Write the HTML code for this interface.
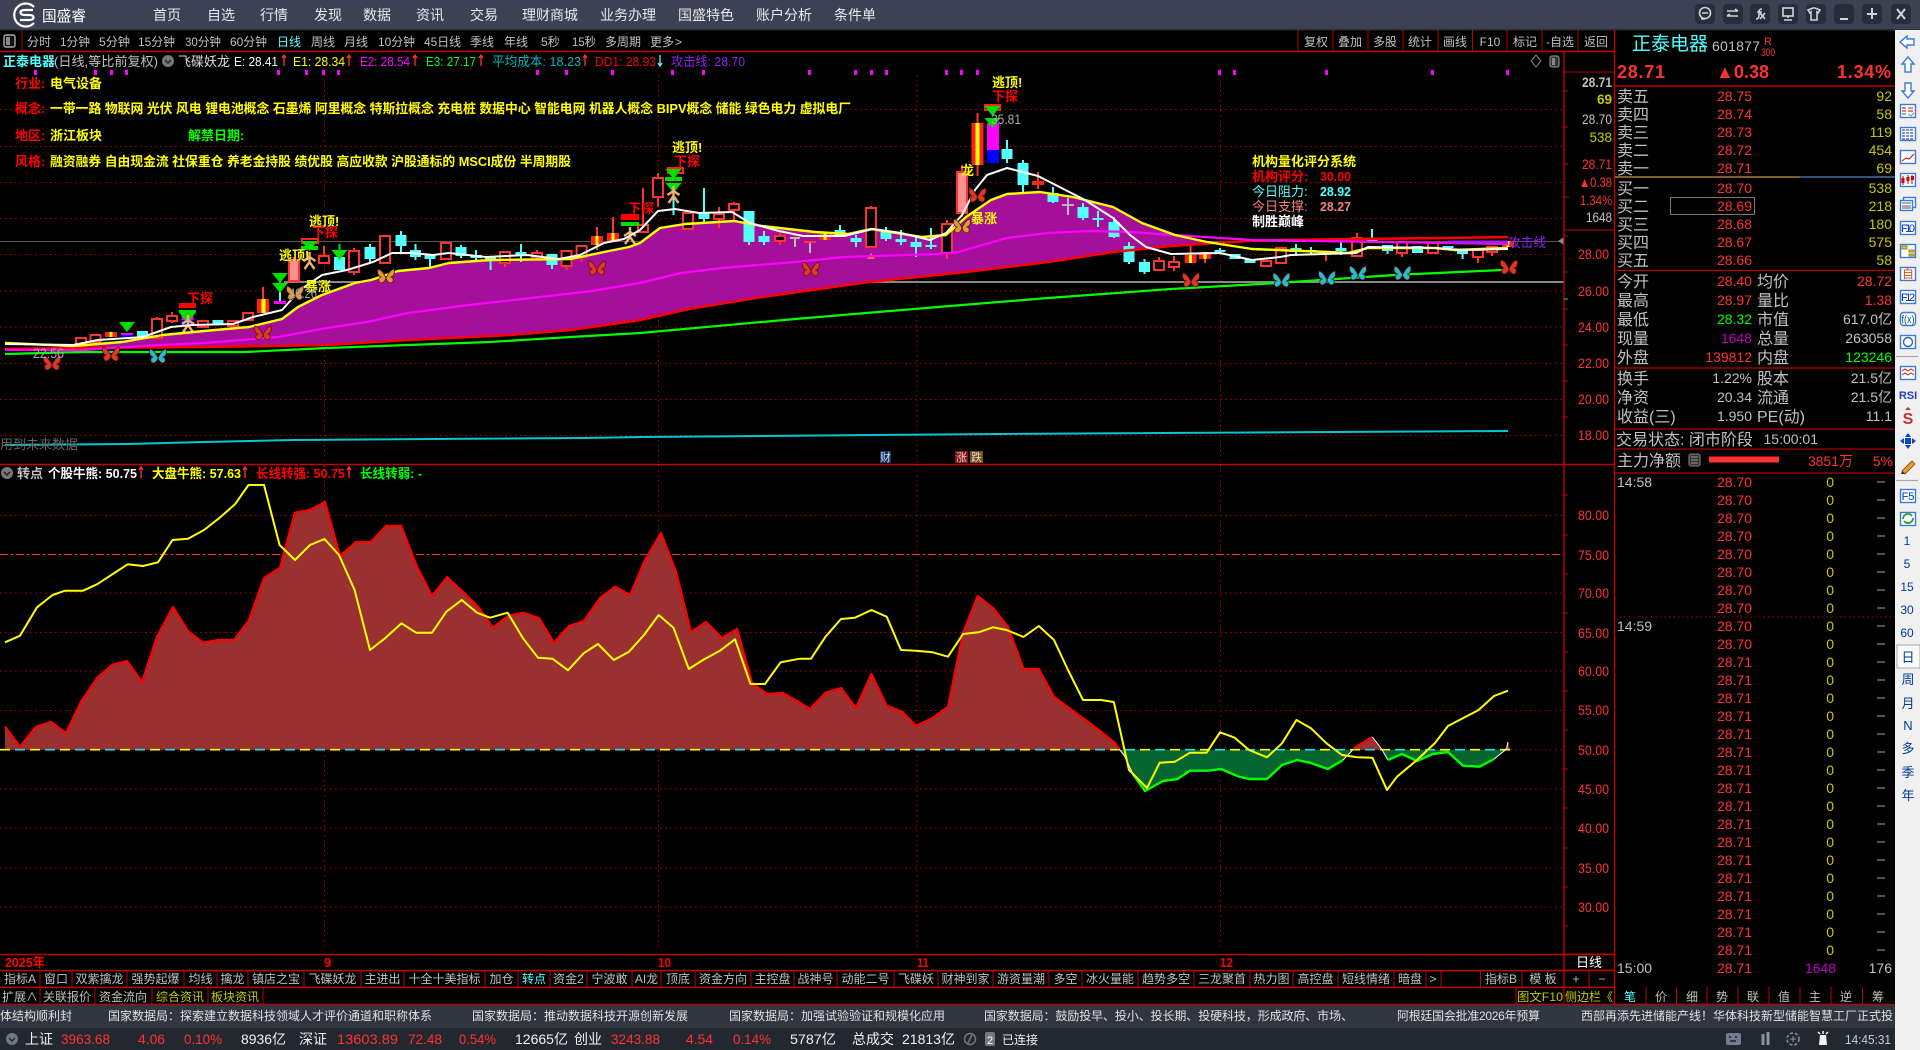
<!DOCTYPE html>
<html lang="zh"><head><meta charset="utf-8"><title>国盛睿</title>
<style>
html,body{margin:0;padding:0;background:#000;width:1920px;height:1050px;overflow:hidden}
svg{display:block;position:absolute;left:0;top:0}
text{font-family:"Liberation Sans","WenQuanYi Zen Hei","Noto Sans CJK SC",sans-serif;white-space:pre}
.g{fill:#c0c0c0}.r{fill:#ff3232}.y{fill:#ffff00}.v{fill:#c8c800}.c{fill:#54ffff}.w{fill:#fff}.l{fill:#00ff00}.m{fill:#ff00ff}.h{fill:#ff0000}.n{fill:#003a9a}
.b{font-weight:bold}.e{text-anchor:end}.t{text-anchor:middle}
</style></head><body>
<svg xmlns="http://www.w3.org/2000/svg" width="1920" height="1050" viewBox="0 0 1920 1050">
<defs>
<g id="bf"><path d="M0 2C-2-2-4-6-8-7-9-3-8 0-5 1-8 2-8 6-5 7-3 7-1 5 0 2 1 5 3 7 5 7 8 6 8 2 5 1 8 0 9-3 8-7 4-6 2-2 0 2z" stroke="#601010" stroke-width=".8"/></g>
<g id="pn"><path d="M0-8V2M0-3-6 1M0-3 6 1M0 2-5 9M0 2 5 9" stroke="#f0b070" stroke-width="2.4" fill="none"/></g>
<g id="dn"><path d="M-8 0H8L0 10z" fill="#00e000"/></g>
</defs>
<rect width="1920" height="1050" fill="#000"/>

<!-- Title bar -->
<rect width="1920" height="30" fill="#3c4254"/><rect y="29" width="1920" height="1.5" fill="#2b2f3b"/>
<path d="M34 7A11.500 11.500 0 1 0 34 23" fill="none" stroke="#fff" stroke-width="2.200"/>
<path d="M33 10H25Q20.500 10 20.500 12.500Q20.500 15 25 15H29Q33.500 15 33.500 17.500Q33.500 20 29 20H20" fill="none" stroke="#fff" stroke-width="2.200"/>
<text x="42" y="21" font-size="15" class="w" textLength="44" lengthAdjust="spacingAndGlyphs">国盛睿</text>
<g font-size="14" fill="#e8e8ee">
<text x="153" y="20">首页</text><text x="207" y="20">自选</text><text x="260" y="20">行情</text><text x="314" y="20">发现</text><text x="363" y="20">数据</text><text x="416" y="20">资讯</text><text x="470" y="20">交易</text><text x="522" y="20">理财商城</text><text x="600" y="20">业务办理</text><text x="678" y="20">国盛特色</text><text x="756" y="20">账户分析</text><text x="834" y="20">条件单</text>
</g>
<g fill="#282d39"><rect x="1695" y="4" width="20" height="20" rx="4"/><rect x="1723" y="4" width="20" height="20" rx="4"/><rect x="1750" y="4" width="20" height="20" rx="4"/><rect x="1778" y="4" width="20" height="20" rx="4"/><rect x="1806" y="4" width="20" height="20" rx="4"/><rect x="1834" y="4" width="20" height="20" rx="4"/><rect x="1862" y="4" width="20" height="20" rx="4"/><rect x="1891" y="4" width="20" height="20" rx="4"/></g>
<g fill="none" stroke="#d0d4dc" stroke-width="1.600">
<circle cx="1705" cy="13" r="5.500"/><path d="M1702 13h6M1705 19h-4"/>
<path d="M1727 11h11M1735 9l3 2M1727 16h11M1730 14l-3 2"/>
<path d="M1756 19q3 0 3-4v-3q0-3 3-3M1757 12h5M1760 13l5 6M1765 13l-5 6"/>
<rect x="1783" y="8" width="10" height="8"/><path d="M1788 16v2M1784 20h8"/>
<path d="M1813 8l-5 2 2 3 1-1v8h6v-8l1 1 2-3-5-2z"/>
<path d="M1840 19h8" stroke-width="2"/>
<path d="M1872 8v6M1867 14h10M1872 14v5" stroke-width="2"/>
<path d="M1897 9l8 10M1905 9l-8 10" stroke-width="2"/>
</g>

<!-- Toolbar -->
<rect x="4" y="35" width="11" height="12" rx="2" fill="#111" stroke="#aaa" stroke-width="1.400"/><rect x="6" y="37" width="4" height="8" fill="#888"/>
<path d="M22 30V51" stroke="#b00000"/>
<g font-size="12" class="g">
<text x="27" y="46" textLength="24">分时</text><text x="60" y="46" textLength="30" lengthAdjust="spacingAndGlyphs">1分钟</text><text x="99" y="46" textLength="31" lengthAdjust="spacingAndGlyphs">5分钟</text><text x="138" y="46" textLength="37" lengthAdjust="spacingAndGlyphs">15分钟</text><text x="185" y="46" textLength="36" lengthAdjust="spacingAndGlyphs">30分钟</text><text x="230" y="46" textLength="37" lengthAdjust="spacingAndGlyphs">60分钟</text><text x="277" y="46" class="c">日线</text><text x="311" y="46">周线</text><text x="344" y="46">月线</text><text x="378" y="46" textLength="37" lengthAdjust="spacingAndGlyphs">10分钟</text><text x="424" y="46" textLength="37" lengthAdjust="spacingAndGlyphs">45日线</text><text x="470" y="46">季线</text><text x="504" y="46">年线</text><text x="541" y="46" textLength="19" lengthAdjust="spacingAndGlyphs">5秒</text><text x="572" y="46" textLength="24" lengthAdjust="spacingAndGlyphs">15秒</text><text x="605" y="46">多周期</text><text x="650" y="46">更多</text><text x="675" y="46">&gt;</text>
<text x="1316" y="46" class="t">复权</text><text x="1350" y="46" class="t">叠加</text><text x="1385" y="46" class="t">多股</text><text x="1420" y="46" class="t">统计</text><text x="1455" y="46" class="t">画线</text><text x="1490" y="46" class="t">F10</text><text x="1525" y="46" class="t">标记</text><text x="1560" y="46" class="t">-自选</text><text x="1596" y="46" class="t">返回</text>
</g>
<path d="M1298 30V51M1333 30V51M1368 30V51M1403 30V51M1438 30V51M1472.500 30V51M1507 30V51M1542 30V51M1578 30V51" stroke="#b00000"/>
<path d="M0 51.500H1614" stroke="#c00000" stroke-width="1.400"/>

<!-- Grid -->
<g stroke="#b40000" stroke-dasharray="1.500 3.500" fill="none">
<path d="M0 109.500H1564M0 146.500H1564M0 182.500H1564M0 218.500H1564M0 254.500H1564M0 291H1564M0 327H1564M0 363.500H1564M0 399.500H1564M0 435.500H1564"/>
<path d="M0 515.500H1564M0 593H1564M0 632.500H1564M0 671H1564M0 710.500H1564M0 789H1564M0 828H1564M0 868H1564M0 907H1564"/>
<path d="M324.500 75V950M658.500 75V950M917 75V950M1220.500 75V950"/>
</g>
<path d="M0 554.500H1564" stroke="#ff3030" stroke-dasharray="8 3 2 3"/>
<path d="M0 241.500H1564" stroke="#555"/>
<path d="M284 282H1564" stroke="#888" stroke-width="2"/>

<!-- Fill upper -->
<polygon fill="#a5109a" points="82,345 122,342 163,335 204,331 249,327 282,319 298,307 322,295 355,283 371,280 398,271 429,268 449,263 490,260 571,259 604,252 629,247 640,243 660,228 685,224 734,221 762,226 815,232 848,234 871,229 922,237 946,235 966,217 991,200 1007,194 1040,192 1073,197 1113,207 1142,223 1175,235 1207,242 1225,244 1207,243 1171,246 1113,252 1048,262 966,272 869,282 762,297 689,309 640,320 571,330 510,335 408,340 327,345 204,347 82,348"/>

<!-- Magenta dots -->
<path fill="#ff00ff" d="M34 70h3v5h-3zM94 70h3v5h-3zM110 70h3v5h-3zM125 70h3v5h-3zM277 70h3v5h-3zM305 70h3v5h-3zM322 70h3v5h-3zM337 70h3v5h-3zM536 70h3v5h-3zM565 70h3v5h-3zM611 70h3v5h-3zM671 70h3v5h-3zM702 70h3v5h-3zM808 70h3v5h-3zM854 70h3v5h-3zM870 70h3v5h-3zM885 70h3v5h-3zM945 70h3v5h-3zM960 70h3v5h-3zM976 70h3v5h-3zM1218 70h3v5h-3zM1233 70h3v5h-3zM1325 70h3v5h-3zM1431 70h3v5h-3zM1506 70h3v5h-3z"/>

<!-- Candle wicks -->
<path stroke="#ff3232" stroke-width="2" fill="none" d="M157 317v4M172 312v11M324 246v12M354 248v27M505 263v4M537 250v11M566.500 266v4M581.600 257v5M643 188v38M658 173v6M658 196v11M719 207v7M719 219v9M734 202v2M734 210v10M780 232v4M780 241v4M871 206v3M947 220v5M947 253v6M1159 257v5M1174 256v6M1174 267v4M1326 251v10M1357 233v6M1402 253v4M1478 257v6M1492 252v4M263 287v13M597 227v9M597 245v5M613 217v17M977.500 113v11M977.500 165v11M1190.600 246v10M1205 259v4M1038 172v17M294 257v4M962 165v8M962 212v5"/>
<path stroke="#54ffff" stroke-width="2" fill="none" d="M370 244v19M401 231v21M415.500 244v16M430 259v8M461 245v13M476 250v12M490.600 257v13M521 244v18M552 265v4M704 188v35M749 242v3M764 231v14M840 225v10M856 235v12M886 227v14M901 230v15M916 237v20M931 228v21M1007 140v23M1023 160v33M1053 187v16M1083 203v17M1098 211v16M1114 217v21M1129 242v22M1144.500 259v15M1220 248v6M1296 244v10M1311 247v7M1341 242v13M1372 229v13M1387.500 251v3M1462.600 254v5M280 275v27M673.500 185v30"/>
<path fill="#54ffff" d="M137 331h11v7h-11zM212.500 320h11v4h-11zM334 257h11v13h-11zM364.500 247h11v12h-11zM395.500 235h11v11h-11zM410 250h11v7h-11zM424.500 255h11v4h-11zM455.500 247h11v9h-11zM470.500 255h11v3h-11zM485 257h11v2h-11zM515.500 252h11v3h-11zM546.500 254h11v11h-11zM698.500 213h11v6h-11zM743.500 211h11v31h-11zM758.500 236h11v6h-11zM834.500 230h11v5h-11zM850.500 238h11v4h-11zM880.500 232h11v7h-11zM895.500 239h11v3h-11zM910.500 242h11v5h-11zM925.500 245h11v2h-11zM1001.500 149h11v10h-11zM1017.500 163h11v22h-11zM1047.500 193h11v9h-11zM1077.500 207h11v11h-11zM1092.500 218h11v2h-11zM1108.500 222h11v15h-11zM1123.500 246h11v16h-11zM1139 262h11v10h-11zM1214.500 250h11v2h-11zM1229.500 254h11v5h-11zM1244.500 259h11v4h-11zM1290.500 248h11v4h-11zM1305.500 250h11v2h-11zM1335.500 248h11v3h-11zM1366.500 239h11v2h-11zM1382 245h11v6h-11zM1412 246h11v7h-11zM1442.500 246h11v2h-11zM1457 250h11v4h-11z"/>
<!-- hollow -->
<path fill="#000" stroke="#ff3232" stroke-width="2" d="M76 338h10v9h-10zM90.500 335h10v7h-10zM152 319h10v19h-10zM167 316h10v5h-10zM198 321h10v6h-10zM228 321h10v5h-10zM243 313h10v7h-10zM319 256h10v7h-10zM349 251h10v21h-10zM380 236h10v27h-10zM441 243h10v16h-10zM500 252h10v11h-10zM532 253h10v4h-10zM561.500 251h10v15h-10zM576.600 246h10v11h-10zM638 225h10v7h-10zM653 178h10v19h-10zM683 213h10v16h-10zM714 214h10v5h-10zM729 204h10v6h-10zM775 236h10v5h-10zM866 208h10v39h-10zM942 224h10v29h-10zM1154 261h10v9h-10zM1169 262h10v5h-10zM1261 261h10v5h-10zM1276 248h10v15h-10zM1352 238h10v18h-10zM1397 242h10v11h-10zM1428 243h10v10h-10zM1473 250h10v7h-10zM1487 247h10v5h-10z"/>
<path fill="#ff9090" stroke="#ff3232" stroke-width="2" d="M289 260h10v21h-10zM957 172h10v41h-10z"/>
<!-- filled red -->
<path fill="#ff2020" d="M105 332h12v5h-12zM257 299h12v14h-12zM591 236h12v9h-12zM607 233h12v9h-12zM819 233h12v7h-12zM971.500 123h12v42h-12zM1184.600 255h12v8h-12zM1199 252h12v7h-12zM1502 241h12v6h-12zM1032 181h12v4h-12z"/>
<path fill="#ffff00" d="M109.500 332h3v5h-3zM261.500 299h4v14h-4zM595.500 236h3v9h-3zM611.500 233h3v9h-3zM823.500 233h3v7h-3zM975.500 123h4v42h-4zM1189 255h3v8h-3zM1203.500 252h3v7h-3zM1506.500 241h3v6h-3z"/>
<!-- magenta/blue -->
<rect x="987" y="123" width="12" height="27" fill="#ff00ff"/><rect x="987" y="150" width="12" height="13" fill="#0000ff"/>
<rect x="181.500" y="316" width="12" height="4" fill="#ff00ff"/><rect x="181.500" y="320" width="12" height="5" fill="#0000ff"/>
<rect x="121" y="333" width="12" height="2" fill="#ff00ff"/><rect x="121" y="335" width="12" height="2" fill="#0000ff"/>
<rect x="274" y="301" width="12" height="3" fill="#ff00ff"/>
<!-- gray doji -->
<path stroke="#b8b8b8" stroke-width="2" fill="none" d="M795 237v10M790 238h10M1068 198v17M1062 205h12M810 243v10"/><path stroke="#ff3232" stroke-width="2" d="M804 242h12"/>
<path fill="#ff8040" d="M871 253l-4 6h8z" opacity=".9"/>
<!-- Signal bars -->
<path fill="#ff0000" d="M179 303h17v5h-17zM621 214h18v6h-18z"/>
<path fill="#00e000" d="M179 310h17v3h-17zM301 246h17v4h-17zM621 222h18v4h-18zM665 177h17v4h-17z"/>
<path fill="none" stroke="#ff2020" stroke-width="2" d="M668 168h15v5h-15zM302 239h16v4h-16z"/>
<path fill="none" stroke="#ff2020" stroke-width="2" d="M985 105h15v5h-15z"/>
<use href="#dn" x="187.500" y="313"/><use href="#dn" transform="translate(127 322)"/><use href="#dn" x="280" y="273"/><use href="#dn" x="280" y="283"/><use href="#dn" x="309.500" y="241"/><use href="#dn" x="339.500" y="250"/><use href="#dn" x="673.500" y="169"/><use href="#dn" x="673.500" y="183"/><use href="#dn" x="992.500" y="106"/><use href="#dn" x="992.500" y="118"/>
<path stroke="#00e000" stroke-width="2" d="M187.500 313v8M339.500 244v8M280 280v6"/>
<use href="#pn" x="188" y="323"/><use href="#pn" x="309.500" y="260"/><use href="#pn" x="630" y="235"/><use href="#pn" x="673.500" y="194"/>

<!-- Lines upper -->
<g fill="none" stroke-linejoin="round">
<polyline stroke="#00c8d0" stroke-width="2" points="5,445 127,444 204,442 294,440 430,439 582,438 640,437 1000,434 1508,431"/>
<polyline stroke="#00ff00" stroke-width="2.200" points="5,354 82,352 245,352 327,348 408,345 490,342 571,337 640,333 795,319 926,308 1048,298 1171,289 1277,283 1395,275 1502,270"/>
<polyline stroke="#ff0000" stroke-width="2.600" points="5,349 82,348 204,347 327,345 408,340 510,335 571,330 640,320 689,309 762,297 869,282 966,272 1048,262 1113,252 1171,246 1248,241 1281,240 1447,238 1508,237"/>
<polyline stroke="#ff00ff" stroke-width="2.200" points="5,350 82,350 143,346 204,343 278,337 327,328 367,322 408,313 469,305 531,298 592,291 640,283 681,273 722,268 795,262 844,257 938,254 958,252 1007,238 1048,233 1089,231 1130,232 1205,237 1252,240 1447,243 1508,244"/>
<path stroke="#a020f0" stroke-width="3" d="M1448 242H1508"/>
<polyline stroke="#ffff00" stroke-width="2.400" points="5,343 73,346 122,342 163,335 204,331 249,327 282,319 298,307 322,295 355,283 371,280 398,271 429,268 449,263 490,260 571,259 604,252 629,247 640,243 660,228 685,224 734,221 762,226 815,232 848,234 871,229 922,237 946,235 966,217 991,200 1007,194 1040,192 1073,197 1113,207 1142,223 1175,235 1207,242 1252,249 1277,250 1328,252 1348,253 1368,248 1435,248 1455,250 1508,248"/>
<polyline stroke="#fff" stroke-width="2" points="5,344 73,345 98,340 143,337 171,327 192,325 233,324 253,317 282,310 300,290 322,275 347,270 373,262 392,253 412,253 433,255 449,253 486,257 527,255 559,259 580,255 604,243 624,239 640,230 658,211 675,209 699,213 732,212 750,223 779,231 803,236 844,236 873,229 901,233 930,240 946,233 962,215 975,190 987,175 1007,168 1038,176 1085,200 1113,218 1130,235 1146,247 1171,254 1220,253 1252,260 1280,257 1291,255 1356,253 1368,247 1435,248 1463,250 1508,249"/>
</g>
<path d="M1558 241l6-4v8z" fill="#888"/>
<!-- Butterflies -->
<g fill="#e03828"><use href="#bf" x="52" y="363"/><use href="#bf" x="111" y="354"/><use href="#bf" x="263" y="333"/><use href="#bf" x="597" y="268"/><use href="#bf" x="811" y="269"/><use href="#bf" x="977.500" y="195"/><use href="#bf" x="1191" y="280"/><use href="#bf" x="1509" y="267"/></g>
<g fill="#20c0d0"><use href="#bf" x="158" y="356"/><use href="#bf" x="1281.500" y="280"/><use href="#bf" x="1327" y="278"/><use href="#bf" x="1358" y="273"/><use href="#bf" x="1402.500" y="273"/></g>
<g fill="#d8a030"><use href="#bf" x="295" y="293"/><use href="#bf" x="386" y="276"/><use href="#bf" x="962" y="226"/></g>

<!-- Info row -->
<g font-size="13">
<text x="3" y="66" class="c b">正泰电器</text><text x="54" y="66" class="g" textLength="104" lengthAdjust="spacingAndGlyphs">(日线,等比前复权)</text>
<circle cx="168" cy="61" r="6" fill="#777"/><path d="M165 60l3 3 3-3" fill="none" stroke="#222" stroke-width="1.500"/>
<text x="178" y="66" fill="#ddd">飞碟妖龙</text>
<text x="234" y="66" class="w" textLength="44" lengthAdjust="spacingAndGlyphs">E: 28.41</text>
<text x="293" y="66" class="y" textLength="52" lengthAdjust="spacingAndGlyphs">E1: 28.34</text>
<text x="360" y="66" class="m" textLength="50" lengthAdjust="spacingAndGlyphs">E2: 28.54</text>
<text x="426" y="66" class="l" textLength="50" lengthAdjust="spacingAndGlyphs">E3: 27.17</text>
<text x="492" y="66" fill="#00b8c0" textLength="89" lengthAdjust="spacingAndGlyphs">平均成本: 18.23</text>
<text x="595" y="66" class="h" textLength="61" lengthAdjust="spacingAndGlyphs">DD1: 28.93</text>
<text x="671" y="66" fill="#9020f0" textLength="74" lengthAdjust="spacingAndGlyphs">攻击线: 28.70</text>
</g>
<path fill="none" stroke="#ff3232" stroke-width="1.300" d="M284 66V55M282 58l2-3 2 3M349 66V55M347 58l2-3 2 3M415 66V55M413 58l2-3 2 3M481 66V55M479 58l2-3 2 3M585 66V55M583 58l2-3 2 3"/>
<path fill="none" stroke="#54ffff" stroke-width="1.300" d="M660 55V66M658 63l2 3 2-3"/>
<path d="M1536 55l5 6-5 6-5-6z" fill="none" stroke="#888"/><rect x="1550" y="56" width="9" height="11" rx="2" fill="#333" stroke="#999"/><rect x="1552" y="58" width="3" height="7" fill="#888"/>

<!-- Info text lines -->
<g font-size="13" class="b">
<text x="15" y="88" class="h">行业:</text><text x="50" y="88" class="y">电气设备</text>
<text x="15" y="113" class="h">概念:</text><text x="50" y="113" class="y" textLength="801" lengthAdjust="spacingAndGlyphs">一带一路 物联网 光伏 风电 锂电池概念 石墨烯 阿里概念 特斯拉概念 充电桩 数据中心 智能电网 机器人概念 BIPV概念 储能 绿色电力 虚拟电厂</text>
<text x="15" y="140" class="h">地区:</text><text x="50" y="140" class="y">浙江板块</text><text x="188" y="140" class="l">解禁日期:</text>
<text x="15" y="166" class="h">风格:</text><text x="50" y="166" class="y" textLength="521" lengthAdjust="spacingAndGlyphs">融资融券 自由现金流 社保重仓 养老金持股 绩优股 高应收款 沪股通标的 MSCI成份 半周期股</text>
<!-- signal labels -->
<text x="309" y="226" class="y">逃顶!</text><text x="312" y="237" class="h">下探</text>
<text x="279" y="260" class="y">逃顶!</text>
<text x="187" y="303" class="h">下探</text>
<text x="305" y="291" class="y">暴涨</text>
<text x="628" y="213" class="h">下探</text>
<text x="672" y="152" class="y">逃顶!</text><text x="674" y="166" class="h">下探</text>
<text x="992" y="87" class="y">逃顶!</text><text x="992" y="101" class="h">下探</text>
<text x="961" y="175" class="y">龙</text>
<text x="971" y="223" class="y">暴涨</text>
<text x="1252" y="166" class="y">机构量化评分系统</text>
<text x="1252" y="181" class="h">机构评分:</text><text x="1320" y="181" class="h" textLength="31" lengthAdjust="spacingAndGlyphs">30.00</text>
<text x="1252" y="196" class="c" font-weight="normal">今日阻力:</text><text x="1320" y="196" class="c" textLength="31" lengthAdjust="spacingAndGlyphs">28.92</text>
<text x="1252" y="211" fill="#f08080" font-weight="normal">今日支撑:</text><text x="1320" y="211" fill="#f08080" textLength="31" lengthAdjust="spacingAndGlyphs">28.27</text>
<text x="1252" y="226" class="w">制胜巅峰</text>
</g>
<g font-size="14" fill="#aaa"><text x="991" y="124" textLength="30" lengthAdjust="spacingAndGlyphs">35.81</text><text x="33" y="358" textLength="31" lengthAdjust="spacingAndGlyphs">22.56</text><text x="289" y="298" textLength="28" lengthAdjust="spacingAndGlyphs">40.26</text></g>
<text x="1508" y="247" font-size="13" fill="#9020f0" textLength="38" lengthAdjust="spacingAndGlyphs">攻击线</text>
<text x="0" y="449" font-size="13" fill="#666">用到未来数据</text>
<rect x="880" y="451" width="11" height="12" fill="#103070"/><text x="885.500" y="461" font-size="11" class="t" fill="#ddd">财</text>
<rect x="955" y="451" width="13" height="12" fill="#8a1010"/><text x="961.500" y="461" font-size="11" class="t" fill="#ddd">涨</text>
<rect x="970" y="451" width="13" height="12" fill="#7a4a10"/><text x="976.500" y="461" font-size="11" class="t" fill="#ddd">跌</text>

<!-- Pane divider -->
<path d="M0 464.500H1614" stroke="#c00000" stroke-width="1.400"/>
<circle cx="7" cy="473" r="6" fill="#777"/><path d="M4 472l3 3 3-3" fill="none" stroke="#222" stroke-width="1.500"/>
<g font-size="13">
<text x="17" y="478" class="g b">转点</text>
<text x="48" y="478" class="w b" textLength="89" lengthAdjust="spacingAndGlyphs">个股牛熊: 50.75</text>
<text x="152" y="478" class="y b" textLength="89" lengthAdjust="spacingAndGlyphs">大盘牛熊: 57.63</text>
<text x="256" y="478" class="h b" textLength="89" lengthAdjust="spacingAndGlyphs">长线转强: 50.75</text>
<text x="360" y="478" class="l b" textLength="62" lengthAdjust="spacingAndGlyphs">长线转弱: -</text>
</g>
<path fill="none" stroke="#ff3232" stroke-width="1.300" d="M141 478V467M139 470l2-3 2 3M245 478V467M243 470l2-3 2 3M349 478V467M347 470l2-3 2 3"/>

<!-- Lower pane -->
<polygon fill="#9a3030" points="5,749.700 5,726.700 20,746.700 36,726.700 51,722 66,733 81,701.700 97,678 112,665 127,661 142,682 157,636.700 173,607 188,631 203,642.700 218,640 234,640 249,620 264,578 280,567.700 295,512.700 310,510 325,502 340,556 356,542 371,542 386,526 401,525.700 417,566.700 432,596 447,577 462,591 478,606.700 493,627.700 508,616 523,612.700 539,618 554,642.700 569,626 584,621 600,598 615,586.700 630,595 645,560 661,533 676,571.700 691,632 706,622 722,638 737,629 752,683 767,694 783,693 800,703 810,709 825.500,692.700 841,688 856,708 871.400,674 886.700,705.700 902,711.700 916,725.700 932.600,718 948,706.700 963,633 977.600,596 993,608 1008,626.700 1023.500,669 1038.800,669 1054,696.700 1069,708 1085.700,720 1101,731.700 1115,743 1119,749.700"/>
<polygon fill="#9a3030" points="1353.600,749.700 1356,746.700 1372.400,737 1381.600,749.700"/>
<polygon fill="#9a3030" points="1505,749.700 1508,742 1510,749.700"/>
<polygon fill="#06662f" points="1119,749.700 1124,755 1133,774 1145,791 1163,781 1177.500,779 1190,770.700 1208,770.700 1221,769 1239,776.700 1249,779 1267,779 1282,765 1297,760 1310,762.700 1328,769 1343,760 1353.600,749.700"/>
<polygon fill="#06662f" points="1381.600,749.700 1388,760 1402,754 1417,761 1432.600,754 1448,752 1463,765.700 1479.600,766.700 1494,759 1506.600,749.700"/>
<g fill="none" stroke-linejoin="round">
<path d="M0 749.700H1510" stroke="#ffff00" stroke-width="1.600" stroke-dasharray="10 20"/>
<path d="M15 749.700H1510" stroke="#20e0e8" stroke-width="1.600" stroke-dasharray="10 20"/>
<path d="M1510 749.700H1564" stroke="#b40000" stroke-dasharray="1.500 3.500"/>
<polyline stroke="#ff0000" stroke-width="2.200" points="5,726.700 20,746.700 36,726.700 51,722 66,733 81,701.700 97,678 112,665 127,661 142,682 157,636.700 173,607 188,631 203,642.700 218,640 234,640 249,620 264,578 280,567.700 295,512.700 310,510 325,502 340,556 356,542 371,542 386,526 401,525.700 417,566.700 432,596 447,577 462,591 478,606.700 493,627.700 508,616 523,612.700 539,618 554,642.700 569,626 584,621 600,598 615,586.700 630,595 645,560 661,533 676,571.700 691,632 706,622 722,638 737,629 752,683 767,694 783,693 800,703 810,709 825.500,692.700 841,688 856,708 871.400,674 886.700,705.700 902,711.700 916,725.700 932.600,718 948,706.700 963,633 977.600,596 993,608 1008,626.700 1023.500,669 1038.800,669 1054,696.700 1069,708 1085.700,720 1101,731.700 1115,743 1119,749"/>
<polyline stroke="#ff0000" stroke-width="2" points="1353.600,749 1356,746.700 1372.400,737"/>
<polyline stroke="#fff" stroke-width="1" points="1119,749 1124,755 1133,774"/>
<polyline stroke="#fff" stroke-width="1" points="1343,760 1353.600,749"/><polyline stroke="#fff" stroke-width="1" points="1372.400,737 1381.600,749 1388,760"/><polyline stroke="#fff" stroke-width="1" points="1494,759 1506.600,749 1508,742"/>
<polyline stroke="#00ff00" stroke-width="2.400" points="1133,774 1145,791 1163,781 1177.500,779 1190,770.700 1208,770.700 1221,769 1239,776.700 1249,779 1267,779 1282,765 1297,760 1310,762.700 1328,769 1343,760"/>
<polyline stroke="#00ff00" stroke-width="2.400" points="1388,760 1402,754 1417,761 1432.600,754 1448,752 1463,765.700 1479.600,766.700 1494,759"/>
<polyline stroke="#ffff00" stroke-width="2" points="5,642.300 20,635.700 37,607.300 52.600,595 65,590.700 83,590.700 97,584.300 127.600,564.300 143,566 158,562.300 172.500,540 188,538.700 204,530 219,518.300 235,504.300 248.500,485 264,485 279.600,545 295,560 310,545 324.500,539 339,555 354.600,590 370,650 385,638.300 401.500,623.300 416,632.700 432,632.700 446.400,611.700 461.700,600 477,612.700 490,617.700 507.600,612.700 523,638.300 538,657.700 552.500,658.700 568,670.300 583.600,653.300 598,644 613.800,660 629,651.700 644,635 658.700,615 673.500,627.700 688.800,669 704.600,659 720,650.700 735,639.300 750.500,684 765,684 780.600,662.300 800,658.700 811,658.700 825.500,636.700 841,619 855,617.700 871.400,610 886.700,616.700 901,650 916,650.700 932.600,652.300 948,656.700 963,634 978.600,632.300 993,627.300 1006.600,630 1023.500,637 1038.800,626 1054,640 1068,670 1083,700 1101,700 1113.800,702 1129,770 1147,788 1159.700,762.700 1175,761.700 1190,752.700 1206.600,752.700 1220,732.300 1234.700,737.700 1249,750 1267,757.300 1282,743.300 1296.400,720 1311,728.300 1326.500,743.300 1342,755 1357,757.300 1372.400,757.700 1387,790 1397,776.700 1417,760 1435,743 1448,726 1478.600,710 1494,696 1508,690.700"/>
</g>

<!-- Axis -->
<path d="M1564 52V987M1614.500 30V1005" stroke="#c00000" stroke-width="1.400"/>
<path d="M1564 72H1614M1564 230H1614M1564 954H1614M1564 970H1614" stroke="#c00000"/>
<path stroke="#c00000" d="M1564 91h4M1564 127h4M1564 164h4M1564 197h5M1564 236h4M1564 272h4M1564 309h4M1564 345h4M1564 381h4M1564 417h4M1564 495h4M1564 535h4M1564 574h4M1564 613h4M1564 652h4M1564 691h4M1564 730h4M1564 769h4M1564 808h4M1564 848h4M1564 887h4M1564 926h4"/><path d="M1564 299h4" stroke="#00ff00"/>
<g font-size="13.500" class="e">
<text x="1612" y="87" class="g b" textLength="30" lengthAdjust="spacingAndGlyphs">28.71</text>
<text x="1612" y="104" class="v b">69</text>
<text x="1612" y="124" class="g" textLength="30" lengthAdjust="spacingAndGlyphs">28.70</text>
<text x="1612" y="142" class="v">538</text>
<text x="1612" y="169" class="r" textLength="30" lengthAdjust="spacingAndGlyphs">28.71</text>
<text x="1612" y="187" class="r" textLength="33" lengthAdjust="spacingAndGlyphs">▲0.38</text>
<text x="1612" y="205" class="r" textLength="32" lengthAdjust="spacingAndGlyphs">1.34%</text>
<text x="1612" y="222" class="g" textLength="26" lengthAdjust="spacingAndGlyphs">1648</text>
</g>
<g font-size="14" class="r">
<text x="1578" y="259" textLength="31" lengthAdjust="spacingAndGlyphs">28.00</text><text x="1578" y="296" textLength="31" lengthAdjust="spacingAndGlyphs">26.00</text><text x="1578" y="332" textLength="31" lengthAdjust="spacingAndGlyphs">24.00</text><text x="1578" y="368" textLength="31" lengthAdjust="spacingAndGlyphs">22.00</text><text x="1578" y="404" textLength="31" lengthAdjust="spacingAndGlyphs">20.00</text><text x="1578" y="440" textLength="31" lengthAdjust="spacingAndGlyphs">18.00</text>
<text x="1578" y="520" textLength="31" lengthAdjust="spacingAndGlyphs">80.00</text><text x="1578" y="560" textLength="31" lengthAdjust="spacingAndGlyphs">75.00</text><text x="1578" y="598" textLength="31" lengthAdjust="spacingAndGlyphs">70.00</text><text x="1578" y="638" textLength="31" lengthAdjust="spacingAndGlyphs">65.00</text><text x="1578" y="676" textLength="31" lengthAdjust="spacingAndGlyphs">60.00</text><text x="1578" y="715" textLength="31" lengthAdjust="spacingAndGlyphs">55.00</text><text x="1578" y="755" textLength="31" lengthAdjust="spacingAndGlyphs">50.00</text><text x="1578" y="794" textLength="31" lengthAdjust="spacingAndGlyphs">45.00</text><text x="1578" y="833" textLength="31" lengthAdjust="spacingAndGlyphs">40.00</text><text x="1578" y="873" textLength="31" lengthAdjust="spacingAndGlyphs">35.00</text><text x="1578" y="912" textLength="31" lengthAdjust="spacingAndGlyphs">30.00</text>
</g>

<!-- Date row -->
<path d="M0 954.500H1614M0 970.500H1614M0 987.500H1614M0 1004.500H1895" stroke="#c00000" stroke-width="1.400"/>
<g font-size="13" class="h b"><text x="5" y="967" textLength="40" lengthAdjust="spacingAndGlyphs">2025年</text><text x="324" y="967">9</text><text x="658" y="967" textLength="13" lengthAdjust="spacingAndGlyphs">10</text><text x="917" y="967" textLength="12" lengthAdjust="spacingAndGlyphs">11</text><text x="1220" y="967" textLength="13" lengthAdjust="spacingAndGlyphs">12</text></g>
<text x="1589" y="967" font-size="13" class="t w">日线</text>

<!-- Tabs row1 -->
<path stroke="#c00000" d="M40 970V987M72 970V987M127 970V987M184 970V987M217 970V987M248 970V987M304 970V987M361 970V987M404 970V987M485 970V987M518 970V987M550 970V987M587 970V987M632 970V987M661 970V987M695 970V987M751 970V987M794 970V987M837 970V987M894 970V987M938 970V987M993 970V987M1049 970V987M1082 970V987M1138 970V987M1194 970V987M1250 970V987M1293 970V987M1338 970V987M1394 970V987M1426 970V987M1441 970V987M1480.500 970V987M1522 970V987M1589 970V987M40 987V1005M95 987V1005M152 987V1005M208 987V1005M263 987V1005M1516 987V1005M1564 987V1005M1646 987V1005M1676.500 987V1005M1707 987V1005M1738 987V1005M1769 987V1005M1800 987V1005M1831 987V1005M1862.500 987V1005"/>
<g font-size="12" class="g t">
<text x="20" y="983">指标A</text><text x="56" y="983">窗口</text><text x="99.500" y="983">双紫擒龙</text><text x="155.500" y="983">强势起爆</text><text x="200.500" y="983">均线</text><text x="232.500" y="983">擒龙</text><text x="276" y="983">镇店之宝</text><text x="332.500" y="983">飞碟妖龙</text><text x="382.500" y="983">主进出</text><text x="444.500" y="983">十全十美指标</text><text x="501.500" y="983">加仓</text><text x="534" y="983" class="c">转点</text><text x="568.500" y="983">资金2</text><text x="609.500" y="983">宁波敢</text><text x="646.500" y="983">AI龙</text><text x="678" y="983">顶底</text><text x="723" y="983">资金方向</text><text x="772.500" y="983">主控盘</text><text x="815.500" y="983">战神号</text><text x="865.500" y="983">动能二号</text><text x="916" y="983">飞碟妖</text><text x="965.500" y="983">财神到家</text><text x="1021" y="983">游资量潮</text><text x="1065.500" y="983">多空</text><text x="1110" y="983">冰火量能</text><text x="1166" y="983">趋势多空</text><text x="1222" y="983">三龙聚首</text><text x="1271.500" y="983">热力图</text><text x="1315.500" y="983">高控盘</text><text x="1366" y="983">短线情绪</text><text x="1410" y="983">暗盘</text><text x="1433" y="983">&gt;</text><text x="1501" y="983">指标B</text><text x="1543" y="983">模 板</text><text x="1576" y="983">+</text><text x="1602" y="983">−</text>
<text x="20" y="1001">扩展∧</text><text x="67" y="1001">关联报价</text><text x="123" y="1001">资金流向</text><text x="180" y="1001" class="v">综合资讯</text><text x="235" y="1001" class="v">板块资讯</text>
<text x="1540" y="1001" class="v" textLength="46" lengthAdjust="spacingAndGlyphs">图文F10</text><text x="1589" y="1001" class="v">侧边栏《</text>
<text x="1630" y="1001" class="c">笔</text><text x="1661" y="1001">价</text><text x="1692" y="1001">细</text><text x="1722" y="1001">势</text><text x="1753" y="1001">联</text><text x="1784" y="1001">值</text><text x="1815" y="1001">主</text><text x="1846" y="1001">逆</text><text x="1878" y="1001">筹</text>
</g>

<!-- Right panel -->
<text x="1632" y="50" font-size="19" class="c" textLength="76">正泰电器</text>
<text x="1712" y="51" font-size="14" class="g" textLength="48">601877</text>
<text x="1768" y="45" font-size="11" class="r t">R</text><text x="1768" y="56" font-size="11" class="r t" textLength="14" lengthAdjust="spacingAndGlyphs">300</text>
<g font-size="18" class="r b"><text x="1617" y="78" textLength="48">28.71</text><text x="1716" y="78" textLength="53">▲0.38</text><text x="1891" y="78" class="e" textLength="54">1.34%</text></g>
<path d="M1615 86H1895" stroke="#c00000" stroke-width="1.400"/>
<path d="M1615 177H1800" stroke="#c8963c" stroke-width="1.200"/><path d="M1800 177H1895" stroke="#4a8bc8" stroke-width="1.200"/>
<path d="M1615 270.500H1895M1615 368H1895M1615 429H1895M1615 449H1895M1615 473H1895" stroke="#b00000" stroke-width="1.200"/>
<rect x="1670.500" y="197.500" width="84" height="17" fill="none" stroke="#777"/>
<g font-size="16" class="g">
<text x="1617" y="102">卖五</text><text x="1617" y="120">卖四</text><text x="1617" y="138">卖三</text><text x="1617" y="156">卖二</text><text x="1617" y="174">卖一</text>
<text x="1617" y="194">买一</text><text x="1617" y="212">买二</text><text x="1617" y="230">买三</text><text x="1617" y="248">买四</text><text x="1617" y="266">买五</text>
<text x="1617" y="287">今开</text><text x="1617" y="306">最高</text><text x="1617" y="325">最低</text><text x="1617" y="344">现量</text><text x="1617" y="363">外盘</text>
<text x="1757" y="287">均价</text><text x="1757" y="306">量比</text><text x="1757" y="325">市值</text><text x="1757" y="344">总量</text><text x="1757" y="363">内盘</text>
<text x="1617" y="384">换手</text><text x="1617" y="403">净资</text><text x="1617" y="422">收益(三)</text>
<text x="1757" y="384">股本</text><text x="1757" y="403">流通</text><text x="1757" y="422">PE(动)</text>
<text x="1616" y="445">交易状态: 闭市阶段</text>
<text x="1617" y="466">主力净额</text>
</g>
<rect x="1689" y="454" width="11" height="12" rx="2" fill="#333" stroke="#888"/><path d="M1691 457h7M1691 460h7M1691 463h7" stroke="#999"/>
<rect x="1709" y="456.500" width="70" height="6" fill="#ff3232"/>
<g font-size="14" class="e">
<text x="1752" y="101" class="r">28.75</text><text x="1752" y="119" class="r">28.74</text><text x="1752" y="137" class="r">28.73</text><text x="1752" y="155" class="r">28.72</text><text x="1752" y="173" class="r">28.71</text>
<text x="1752" y="193" class="r">28.70</text><text x="1752" y="211" class="r">28.69</text><text x="1752" y="229" class="r">28.68</text><text x="1752" y="247" class="r">28.67</text><text x="1752" y="265" class="r">28.66</text>
<text x="1892" y="101" class="v">92</text><text x="1892" y="119" class="v">58</text><text x="1892" y="137" class="v">119</text><text x="1892" y="155" class="v">454</text><text x="1892" y="173" class="v">69</text>
<text x="1892" y="193" class="v">538</text><text x="1892" y="211" class="v">218</text><text x="1892" y="229" class="v">180</text><text x="1892" y="247" class="v">575</text><text x="1892" y="265" class="v">58</text>
<text x="1752" y="286" class="r">28.40</text><text x="1752" y="305" class="r">28.97</text><text x="1752" y="324" class="l">28.32</text><text x="1752" y="343" fill="#c000c0">1648</text><text x="1752" y="362" class="r">139812</text>
<text x="1892" y="286" class="r">28.72</text><text x="1892" y="305" class="r">1.38</text><text x="1892" y="324" class="g">617.0亿</text><text x="1892" y="343" class="g">263058</text><text x="1892" y="362" class="l">123246</text>
<text x="1752" y="383" class="g">1.22%</text><text x="1752" y="402" class="g">20.34</text><text x="1752" y="421" class="g">1.950</text>
<text x="1892" y="383" class="g">21.5亿</text><text x="1892" y="402" class="g">21.5亿</text><text x="1892" y="421" class="g">11.1</text>
<text x="1818" y="444" class="g">15:00:01</text>
<text x="1853" y="466" class="r">3851万</text><text x="1893" y="466" class="r">5%</text>
</g>
<!-- Ticks -->
<path d="M1615 617H1895" stroke="#b00000" stroke-dasharray="1.500 3"/>
<g font-size="14"><text x="1617" y="487" class="g">14:58</text><text x="1617" y="631" class="g">14:59</text><text x="1617" y="973" class="g">15:00</text></g>
<g font-size="14" class="e r">
<text x="1752" y="487">28.70</text><text x="1752" y="505">28.70</text><text x="1752" y="523">28.70</text><text x="1752" y="541">28.70</text><text x="1752" y="559">28.70</text><text x="1752" y="577">28.70</text><text x="1752" y="595">28.70</text><text x="1752" y="613">28.70</text><text x="1752" y="631">28.70</text><text x="1752" y="649">28.70</text><text x="1752" y="667">28.71</text><text x="1752" y="685">28.71</text><text x="1752" y="703">28.71</text><text x="1752" y="721">28.71</text><text x="1752" y="739">28.71</text><text x="1752" y="757">28.71</text><text x="1752" y="775">28.71</text><text x="1752" y="793">28.71</text><text x="1752" y="811">28.71</text><text x="1752" y="829">28.71</text><text x="1752" y="847">28.71</text><text x="1752" y="865">28.71</text><text x="1752" y="883">28.71</text><text x="1752" y="901">28.71</text><text x="1752" y="919">28.71</text><text x="1752" y="937">28.71</text><text x="1752" y="955">28.71</text><text x="1752" y="973">28.71</text>
</g>
<g font-size="14" class="e v">
<text x="1834" y="487">0</text><text x="1834" y="505">0</text><text x="1834" y="523">0</text><text x="1834" y="541">0</text><text x="1834" y="559">0</text><text x="1834" y="577">0</text><text x="1834" y="595">0</text><text x="1834" y="613">0</text><text x="1834" y="631">0</text><text x="1834" y="649">0</text><text x="1834" y="667">0</text><text x="1834" y="685">0</text><text x="1834" y="703">0</text><text x="1834" y="721">0</text><text x="1834" y="739">0</text><text x="1834" y="757">0</text><text x="1834" y="775">0</text><text x="1834" y="793">0</text><text x="1834" y="811">0</text><text x="1834" y="829">0</text><text x="1834" y="847">0</text><text x="1834" y="865">0</text><text x="1834" y="883">0</text><text x="1834" y="901">0</text><text x="1834" y="919">0</text><text x="1834" y="937">0</text><text x="1834" y="955">0</text>
<text x="1836" y="973" style="fill:#c000c0">1648</text>
</g>
<text x="1892" y="973" font-size="14" class="e g">176</text>
<path stroke="#aaa" d="M1877 482h8M1877 500h8M1877 518h8M1877 536h8M1877 554h8M1877 572h8M1877 590h8M1877 608h8M1877 626h8M1877 644h8M1877 662h8M1877 680h8M1877 698h8M1877 716h8M1877 734h8M1877 752h8M1877 770h8M1877 788h8M1877 806h8M1877 824h8M1877 842h8M1877 860h8M1877 878h8M1877 896h8M1877 914h8M1877 932h8M1877 950h8"/>

<!-- Ticker -->
<rect y="1005" width="1895" height="23" fill="#30353f"/>
<g font-size="12" fill="#e0e0e0">
<text x="0" y="1020">体结构顺利封</text><text x="108" y="1020">国家数据局：探索建立数据科技领域人才评价通道和职称体系</text><text x="472" y="1020">国家数据局：推动数据科技开源创新发展</text><text x="729" y="1020">国家数据局：加强试验验证和规模化应用</text><text x="984" y="1020" textLength="369">国家数据局：鼓励投早、投小、投长期、投硬科技，形成政府、市场、</text><text x="1397" y="1020" textLength="143">阿根廷国会批准2026年预算</text><text x="1581" y="1020" textLength="312">西部再添先进储能产线！华体科技新型储能智慧工厂正式投</text>
</g>
<!-- Status -->
<rect y="1028" width="1895" height="22" fill="#23272f"/>
<circle cx="12" cy="1039" r="6" fill="#707888"/><path d="M9 1038l3 3 3-3" fill="none" stroke="#222" stroke-width="1.400"/>
<g font-size="14" fill="#f0f0f0"><text x="25" y="1044">上证</text><text x="299" y="1044">深证</text><text x="574" y="1044">创业</text><text x="852" y="1044">总成交</text><text x="1002" y="1044" font-size="12">已连接</text></g>
<g font-size="14" class="r"><text x="61" y="1044" textLength="49" lengthAdjust="spacingAndGlyphs">3963.68</text><text x="138" y="1044" textLength="27" lengthAdjust="spacingAndGlyphs">4.06</text><text x="184" y="1044" textLength="38" lengthAdjust="spacingAndGlyphs">0.10%</text><text x="337" y="1044" textLength="61" lengthAdjust="spacingAndGlyphs">13603.89</text><text x="408" y="1044" textLength="34" lengthAdjust="spacingAndGlyphs">72.48</text><text x="459" y="1044" textLength="37" lengthAdjust="spacingAndGlyphs">0.54%</text><text x="611" y="1044" textLength="49" lengthAdjust="spacingAndGlyphs">3243.88</text><text x="686" y="1044" textLength="27" lengthAdjust="spacingAndGlyphs">4.54</text><text x="733" y="1044" textLength="38" lengthAdjust="spacingAndGlyphs">0.14%</text></g>
<g font-size="14" fill="#f0f0f0"><text x="241" y="1044" textLength="45" lengthAdjust="spacingAndGlyphs">8936亿</text><text x="515" y="1044" textLength="53" lengthAdjust="spacingAndGlyphs">12665亿</text><text x="790" y="1044" textLength="46" lengthAdjust="spacingAndGlyphs">5787亿</text><text x="902" y="1044" textLength="53" lengthAdjust="spacingAndGlyphs">21813亿</text></g>
<circle cx="970" cy="1039" r="5.500" fill="none" stroke="#777" stroke-width="1.500"/><path d="M968 1043l4-8" stroke="#777" stroke-width="1.500"/>
<rect x="985" y="1032" width="10" height="14" rx="2" fill="#777"/><text x="990" y="1044" font-size="11" class="t" fill="#fff">2</text>
<rect x="1726" y="1033" width="15" height="12" rx="2" fill="#707a90"/><path d="M1729 1037h2M1735 1037h2M1730 1041h6" stroke="#222" stroke-width="1.500"/>
<path d="M1763 1034v11M1768 1032v13" stroke="#8a92a4" stroke-width="3"/>
<circle cx="1793" cy="1039" r="6" fill="none" stroke="#8a92a4" stroke-width="1.500" stroke-dasharray="3 2"/><path d="M1793 1036v6M1790 1039h6" stroke="#8a92a4"/>
<path d="M1819 1045h8l-1-10h-6z" fill="#f4f4f4"/><path d="M1818 1032l2 2M1823 1031v3M1828 1032l-2 2" stroke="#f4f4f4" stroke-width="1.500"/>
<text x="1845" y="1044" font-size="13" fill="#c8ccd4" textLength="46" lengthAdjust="spacingAndGlyphs">14:45:31</text>

<!-- Sidebar -->
<rect x="1895" y="30" width="25" height="1020" fill="#f0f0f0"/>
<g fill="#fff" stroke="#3a7bdc" stroke-width="1.400">
<path d="M1900 42l7-6v3h7v6h-7v3z"/>
<path d="M1908 57l6 7h-3v8h-6v-8h-3z"/>
<path d="M1908 98l6-7h-3v-8h-6v8h-3z"/>
<rect x="1900.500" y="104.500" width="15" height="13"/><rect x="1900.500" y="127.500" width="15" height="13"/><rect x="1900.500" y="150.500" width="15" height="13"/><rect x="1900.500" y="173.500" width="15" height="13"/>
<rect x="1903.500" y="197.500" width="12" height="10"/><rect x="1900.500" y="200.500" width="12" height="10"/>
<rect x="1900.500" y="221.500" width="15" height="13"/><rect x="1900.500" y="244.500" width="15" height="13"/><rect x="1900.500" y="267.500" width="15" height="13"/><rect x="1900.500" y="290.500" width="15" height="13"/><rect x="1900.500" y="312.500" width="15" height="13" rx="3"/><rect x="1900.500" y="335.500" width="15" height="13"/>
<rect x="1900.500" y="366.500" width="15" height="13"/><rect x="1900.500" y="489.500" width="15" height="13"/><rect x="1900.500" y="512.500" width="15" height="13"/>
</g>
<path d="M1902 108h4M1902 111h4M1908 108h5M1908 111h5" stroke="#c00000"/><path d="M1902 114h4" stroke="#008000"/><path d="M1908 114l3 2 3-3" stroke="#888" fill="none"/>
<path d="M1902 130h12M1902 133h12M1902 136h12M1902 139h12" stroke="#0020a0" stroke-dasharray="3 1"/>
<path d="M1902 161l4-3 3 1 5-5" stroke="#e00000" fill="none"/>
<path d="M1903 176v9M1908 175v9M1912 175v9" stroke="#c00000"/><path d="M1901.500 178h3v5h-3zM1906.500 177h3v4h-3zM1911 176h3v4h-3z" fill="#e00000"/>
<path d="M1902 203h9M1902 206h9M1902 208h9" stroke="#555"/>
<text x="1908" y="232" font-size="11" class="t" fill="#0030c0" textLength="14">F10</text>
<path fill="#f0c040" stroke="#a08020" d="M1902 246h5v3h-5zM1909 250h5v2h-5zM1909 254h5v2h-5z"/>
<text x="1908" y="278" font-size="12" class="t" fill="#e05010">自</text>
<text x="1908" y="301" font-size="11" class="t" fill="#0030c0" textLength="14">F12</text>
<text x="1908" y="323" font-size="11" class="t" fill="#006080" textLength="13" lengthAdjust="spacingAndGlyphs">f(x)</text>
<circle cx="1908" cy="342" r="4.500" fill="none" stroke="#2a60c0" stroke-width="1.400"/>
<path d="M1896 356.500H1918M1896 480.500H1918" stroke="#aaa" stroke-width="1.200"/>
<path d="M1902 371l3-2 3 2 3-2 3 2M1902 375l3-2 3 2 3-2 3 2" fill="none" stroke="#d02020"/>
<text x="1908" y="399" font-size="11" class="t b" fill="#2040c0">RSI</text>
<text x="1908" y="424" font-size="16" class="t b" fill="#c83030">S</text><path d="M1908 407l3 3h-6z" fill="#c83030"/>
<path fill="#0848c8" d="M1908 433l3 4h-6zM1908 449l3-4h-6zM1900 441l4-3v6zM1916 441l-4-3v6zM1905 438h6v6h-6z"/>
<path d="M1902 471l3 3 10-10-3-3z" fill="#e8a030" stroke="#804010" stroke-width=".8"/><path d="M1902 471l-1 3 4 0z" fill="#333"/>
<text x="1908" y="500" font-size="11" class="t" fill="#0030c0">F5</text>
<path d="M1903 519a5 5 0 0 1 9-3M1913 518a5 5 0 0 1-9 3" fill="none" stroke="#40a040" stroke-width="2"/>
<g font-size="12" class="t n"><text x="1907" y="545">1</text><text x="1907" y="568">5</text><text x="1907" y="591">15</text><text x="1907" y="614">30</text><text x="1907" y="637">60</text></g>
<rect x="1897" y="645" width="23" height="23" fill="#fafafa" stroke="#aaa"/>
<g font-size="13" class="t n"><text x="1908" y="662">日</text><text x="1908" y="684">周</text><text x="1908" y="708">月</text><text x="1908" y="730">N</text><text x="1908" y="753">多</text><text x="1908" y="777">季</text><text x="1908" y="800">年</text></g>
</svg>
</body></html>
